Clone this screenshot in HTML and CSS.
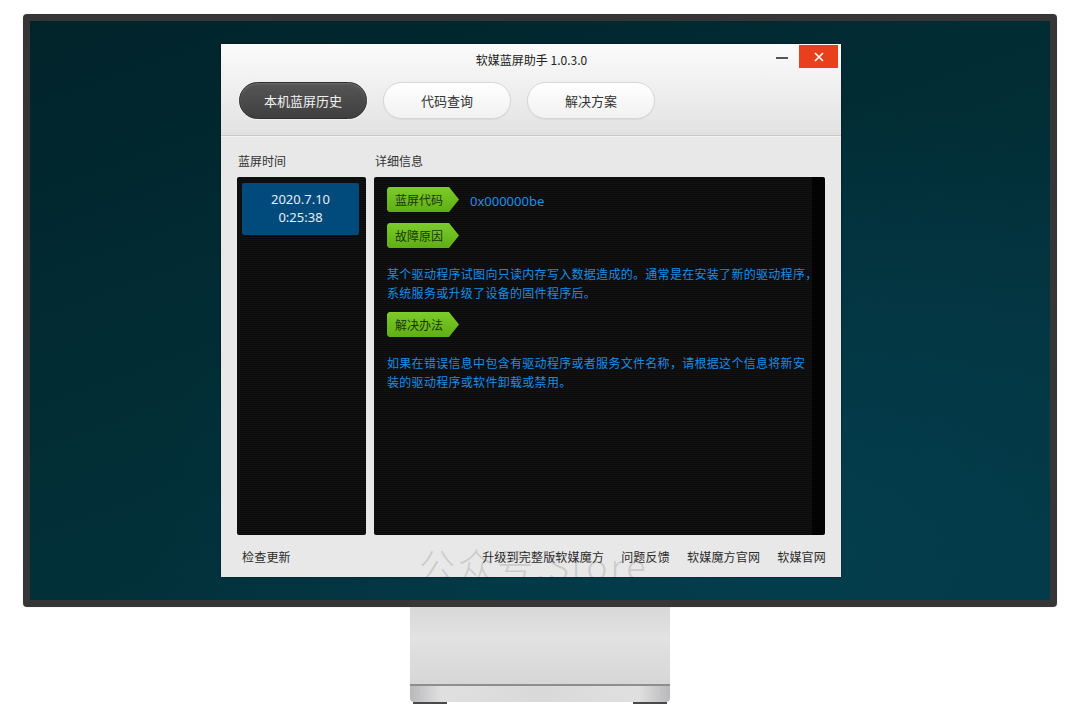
FILE: index.html
```html
<!DOCTYPE html>
<html lang="zh-CN">
<head>
    <meta charset="UTF-8">
    <title>软媒蓝屏助手</title>
    <link rel="stylesheet" href="styles.css">
</head>
<body>
    <div class="monitor">
        <div class="screen">
            <div class="app">
                <header class="app-header">
                    <div class="titlebar">
                        <span class="title">软媒蓝屏助手 1.0.3.0</span>
                        <div class="win-btns">
                            <span class="btn-min"></span>
                            <span class="btn-close">
                                <svg width="12" height="12" viewBox="0 0 12 12"><path d="M2 2 L10 10 M10 2 L2 10" stroke="#fff" stroke-width="1.6" fill="none"/></svg>
                            </span>
                        </div>
                    </div>
                    <nav class="tabs">
                        <button class="tab active">本机蓝屏历史</button>
                        <button class="tab">代码查询</button>
                        <button class="tab">解决方案</button>
                    </nav>
                </header>

                <main class="app-body">
                    <section class="col-left">
                        <div class="label">蓝屏时间</div>
                        <div class="panel list-panel">
                            <div class="record selected">
                                <div>2020.7.10</div>
                                <div>0:25:38</div>
                            </div>
                        </div>
                    </section>
                    <section class="col-right">
                        <div class="label">详细信息</div>
                        <div class="panel detail-panel">
                            <div class="tag-row">
                                <span class="tag">蓝屏代码</span>
                                <span class="code">0x000000be</span>
                            </div>
                            <div class="tag-row">
                                <span class="tag">故障原因</span>
                            </div>
                            <p class="desc">某个驱动程序试图向只读内存写入数据造成的。通常是在安装了新的驱动程序，<br>系统服务或升级了设备的固件程序后。</p>
                            <div class="tag-row">
                                <span class="tag">解决办法</span>
                            </div>
                            <p class="desc">如果在错误信息中包含有驱动程序或者服务文件名称，请根据这个信息将新安<br>装的驱动程序或软件卸载或禁用。</p>
                        </div>
                    </section>
                </main>

                <div class="watermark">公众号.Store</div>
                <footer class="app-footer">
                    <a class="link">检查更新</a>
                    <div class="links">
                        <a class="link">升级到完整版软媒魔方</a>
                        <a class="link">问题反馈</a>
                        <a class="link">软媒魔方官网</a>
                        <a class="link">软媒官网</a>
                    </div>
                </footer>
            </div>
        </div>
    </div>
    <div class="stand">
        <div class="stand-neck"></div>
        <div class="stand-base"></div>
        <div class="stand-feet"><span></span><span></span></div>
    </div>
</body>
</html>
```

FILE: styles.css
```css
body {
    margin: 0;
    background: #fff;
    font-family: "Noto Sans CJK SC", "Noto Sans", sans-serif;
    width: 1080px;
    height: 715px;
    overflow: hidden;
}

.monitor {
    margin: 14px 0 0 23px;
    width: 1034px;
    height: 593px;
    box-sizing: border-box;
    border: 7px solid #363636;
    border-radius: 4px;
    box-shadow: 0 0 1px rgba(0, 0, 0, 0.3);
}

.screen {
    height: 100%;
    box-sizing: border-box;
    padding: 23px 0 0 191px;
    background: radial-gradient(ellipse at 75% 90%, #043d4d 0%, rgba(3, 57, 72, 0) 60%),
                linear-gradient(160deg, #01242a 0%, #022f38 55%, #033844 100%);
}

/* app window */
.app {
    position: relative;
    width: 620px;
    height: 533px;
    background: #e8e8e8;
    overflow: hidden;
    box-shadow: 0 0 2px rgba(0, 0, 0, 0.5);
}

.app-header {
    height: 91px;
    background: linear-gradient(#fbfbfb, #e2e2e2);
    border-bottom: 1px solid #c9c9c9;
    box-shadow: 0 1px 0 #f4f4f4;
}

.titlebar {
    height: 30px;
    display: flex;
    justify-content: center;
    align-items: center;
    position: relative;
}

.title {
    font-size: 12px;
    color: #222;
    margin-left: 1px;
}

.win-btns {
    position: absolute;
    right: 3px;
    top: 1px;
    display: flex;
    align-items: center;
}

.btn-min {
    width: 12px;
    height: 2px;
    background: #555;
    margin-right: 11px;
    margin-top: 2px;
}

.btn-close {
    width: 39px;
    height: 23px;
    background: #e8401c;
    display: flex;
    justify-content: center;
    align-items: center;
}

.tabs {
    display: flex;
    gap: 16px;
    padding: 8px 0 0 18px;
}

.tab {
    width: 128px;
    height: 37px;
    border-radius: 19px;
    border: 1px solid #d6d6d6;
    background: linear-gradient(#ffffff, #f1f1f1);
    font-family: inherit;
    font-size: 13px;
    color: #333;
    box-shadow: 0 1px 1px rgba(0, 0, 0, 0.06);
}

.tab.active {
    background: linear-gradient(#565656, #3f3f3f);
    border: 1px solid #2e2e2e;
    color: #f2f2f2;
    box-shadow: 0 0 0 1px #f0f0f0, inset 0 1px 2px rgba(255, 255, 255, 0.15);
}

.app-body {
    display: flex;
    gap: 8px;
    padding: 15px 16px 0 16px;
}

.label {
    font-size: 12px;
    color: #333;
    height: 20px;
    line-height: 20px;
    margin-bottom: 6px;
    padding-left: 1px;
}

.panel {
    height: 358px;
    box-sizing: border-box;
    border-radius: 2px;
    background: repeating-linear-gradient(0deg, #0b0b0b 0px, #0b0b0b 1px, #121212 1px, #121212 2px);
}

.col-left .panel {
    width: 129px;
    padding: 6px 7px 0 5px;
}

.record {
    height: 52px;
    box-sizing: border-box;
    padding-top: 7px;
    background: #014a7c;
    border-radius: 2px;
    text-align: center;
    font-family: "Noto Sans", sans-serif;
    font-size: 13px;
    line-height: 18px;
    color: #e6eef5;
}

.col-right .panel {
    width: 451px;
    padding: 10px 0 0 13px;
    background: linear-gradient(90deg, transparent 438px, #030303 438px),
                repeating-linear-gradient(0deg, #0b0b0b 0px, #0b0b0b 1px, #121212 1px, #121212 2px);
}

.tag-row {
    display: flex;
    align-items: center;
    margin-bottom: 11px;
}

.tag {
    width: 72px;
    height: 25px;
    box-sizing: border-box;
    padding-left: 8px;
    line-height: 25px;
    font-size: 12px;
    color: #1a3606;
    background: linear-gradient(#7ccc2a, #5fae14);
    clip-path: polygon(0 2px, 2px 0, 62px 0, 72px 50%, 62px 100%, 2px 100%, 0 calc(100% - 2px));
}

.code {
    margin-left: 11px;
    margin-top: 2px;
    font-family: "Noto Sans", sans-serif;
    font-size: 13px;
    color: #1e90e6;
}

.desc {
    margin: 16px 0 10px 0;
    font-size: 12px;
    line-height: 19px;
    letter-spacing: 0.3px;
    color: #1a8ee6;
    white-space: nowrap;
}

.app-footer {
    position: relative;
    display: flex;
    justify-content: space-between;
    align-items: center;
    height: 42px;
    padding: 0 15px 0 21px;
}

.links {
    display: flex;
    gap: 17px;
}

.link {
    font-size: 12px;
    letter-spacing: 0.2px;
    color: #2b2b2b;
}

.watermark {
    position: absolute;
    left: 198px;
    top: 502px;
    font-family: "Noto Sans CJK SC", "Noto Sans", sans-serif;
    font-weight: 300;
    font-size: 36px;
    line-height: 1;
    letter-spacing: 3px;
    color: rgba(150, 150, 150, 0.35);
    pointer-events: none;
}

/* stand */
.stand {
    margin-left: 410px;
    width: 260px;
}

.stand-neck {
    height: 77px;
    background: linear-gradient(#d8d8d9, #e2e2e3 40%, #d6d6d7);
}

.stand-base {
    height: 16px;
    border-top: 2px solid #8e8e90;
    border-radius: 0 0 4px 4px;
    background: linear-gradient(90deg, #b9b9bb, #e0e0e1 12%, #d9d9da 50%, #e0e0e1 88%, #b9b9bb);
}

.stand-feet {
    display: flex;
    justify-content: space-between;
    padding: 0 3px;
}

.stand-feet span {
    width: 34px;
    height: 2px;
    background: #4a4a4a;
}
```
